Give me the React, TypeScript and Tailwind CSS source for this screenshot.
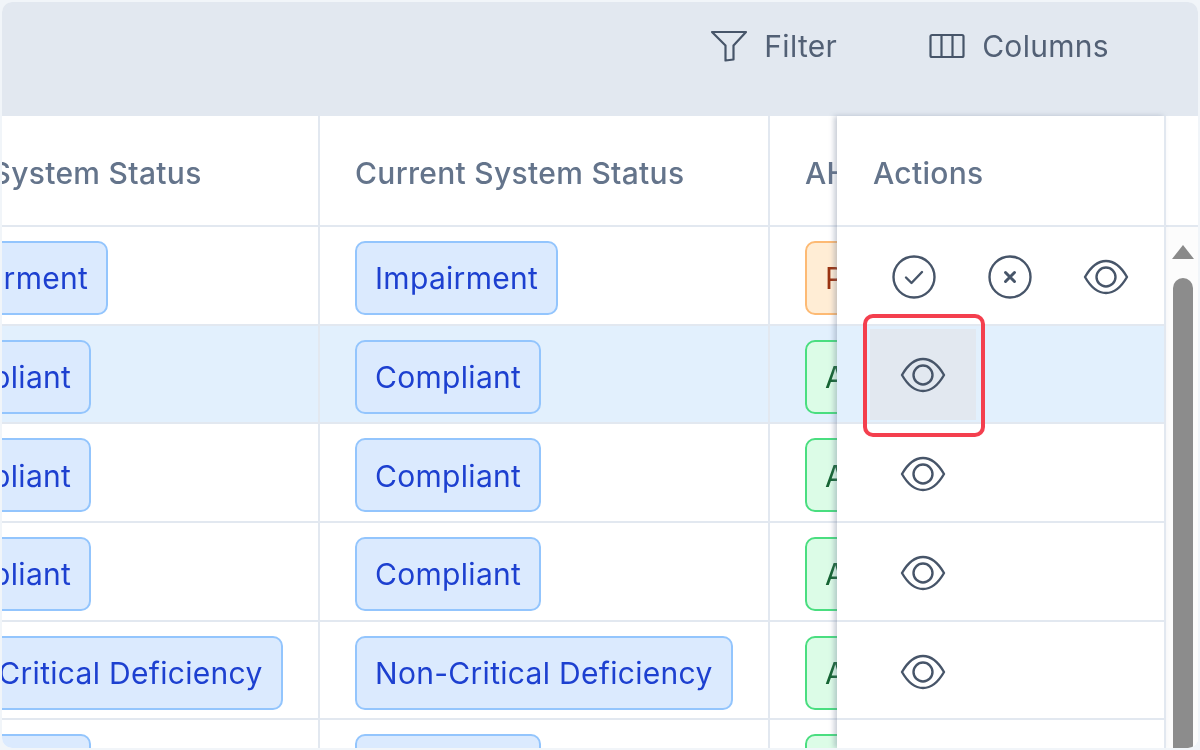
const rows = [
  { status: 'Impairment', ahj: 'Pending', tone: 'orange' },
  { status: 'Compliant', ahj: 'Approved', tone: 'green' },
  { status: 'Compliant', ahj: 'Approved', tone: 'green' },
  { status: 'Compliant', ahj: 'Approved', tone: 'green' },
  { status: 'Non-Critical Deficiency', ahj: 'Approved', tone: 'green' },
  { status: 'Compliant', ahj: 'Approved', tone: 'green' },
];

function EyeIcon() {
  return (
    <svg className="block" width="46" height="36" viewBox="0 0 46 36" fill="none" stroke="#475569" strokeWidth="2.4">
      <path d="M2 18C8 7.500 15 2 23 2C31 2 38 7.500 44 18C38 28.500 31 34 23 34C15 34 8 28.500 2 18Z" strokeLinejoin="round" />
      <circle cx="23" cy="18" r="9.500" />
    </svg>
  );
}

function CheckCircleIcon() {
  return (
    <svg className="block" width="44" height="44" viewBox="0 0 44 44" fill="none" stroke="#475569" strokeWidth="2.400" strokeLinecap="round" strokeLinejoin="round">
      <circle cx="22" cy="22" r="20.500" />
      <path d="M14 22.500L19.500 28L30 17" />
    </svg>
  );
}

function XCircleIcon() {
  return (
    <svg className="block" width="44" height="44" viewBox="0 0 44 44" fill="none" stroke="#475569" strokeWidth="2.400" strokeLinecap="round">
      <circle cx="22" cy="22" r="20.500" />
      <path d="M17.500 17.500L26.500 26.500M26.500 17.500L17.500 26.500" strokeWidth="3" />
    </svg>
  );
}

function FilterIcon() {
  return (
    <svg className="block" width="38" height="32" viewBox="0 0 38 32" fill="none" stroke="#475569" strokeWidth="2.200" strokeLinejoin="round">
      <path d="M2 2H36L23.500 15.500V29.500L15.500 30.500V15.500L2 2Z" />
    </svg>
  );
}

function ColumnsIcon() {
  return (
    <svg className="block" width="36" height="26" viewBox="0 0 36 26" fill="none" stroke="#475569" strokeWidth="2.200" strokeLinejoin="round">
      <rect x="1.500" y="2" width="33" height="22" rx="1.500" />
      <path d="M12.500 2V24M23.500 2V24" />
    </svg>
  );
}

function StatusBadge({ label }: { label: string }) {
  return (
    <span className="inline-flex h-[74px] shrink-0 items-center whitespace-nowrap rounded-[10px] border-2 border-[#93c5fd] bg-[#dbeafe] px-[18px] pt-[2px] text-[30px] tracking-[0.3px] text-[#1d40d0]">
      {label}
    </span>
  );
}

function AhjBadge({ label, tone }: { label: string; tone: string }) {
  const toneClass =
    tone === 'orange'
      ? 'border-[#fdba74] bg-[#ffedd5] text-[#9a3412]'
      : 'border-[#4ade80] bg-[#dcfce7] text-[#166534]';
  return (
    <span className={`inline-flex h-[74px] shrink-0 items-center whitespace-nowrap rounded-[10px] border-2 px-[18px] pt-[2px] text-[30px] tracking-[0.3px] ${toneClass}`}>
      {label}
    </span>
  );
}

function HeaderCell({ label }: { label: string }) {
  return (
    <div className="flex h-full w-[450px] shrink-0 items-center border-r-2 border-[#e2e8f0] pt-[6px] pl-[35px] text-[30px] font-medium tracking-[0.3px] whitespace-nowrap text-[#64748b]">
      {label}
    </div>
  );
}

function BodyCell({ children }: { children: React.ReactNode }) {
  return (
    <div className="flex h-full w-[450px] shrink-0 items-center border-r-2 border-[#e2e8f0] pt-[5px] pl-[35px]">
      {children}
    </div>
  );
}

export default function App() {
  return (
    <div className="h-[750px] w-[1200px] overflow-hidden bg-[#f1f5f9] p-[2px] font-['Inter',sans-serif] blur-[0.5px]">
      <div className="flex h-full flex-col overflow-hidden rounded-[10px] bg-white">
        <div className="flex h-[114px] shrink-0 items-center justify-end gap-[92px] bg-[#e2e8f0] pr-[89px] pb-[26px] text-[30px] tracking-[0.3px] text-[#526075]">
          <button type="button" className="flex items-center gap-[16px]">
            <FilterIcon />
            Filter
          </button>
          <button type="button" className="flex items-center gap-[17px]">
            <ColumnsIcon />
            Columns
          </button>
        </div>

        <div className="relative flex min-h-0 flex-1">
          <div className="min-w-0 flex-1 overflow-hidden">
            <div className="ml-[-132px] w-[1400px]">
              <div className="flex h-[111px] border-b-2 border-[#e2e8f0]">
                <HeaderCell label="Initial System Status" />
                <HeaderCell label="Current System Status" />
                <HeaderCell label="AHJ Status" />
              </div>
              {rows.map((row, i) => (
                <div
                  key={i}
                  className={`flex h-[98.7px] border-b-2 border-[#e2e8f0] ${i === 1 ? 'bg-[#e2f0fd]' : ''}`}
                >
                  <BodyCell><StatusBadge label={row.status} /></BodyCell>
                  <BodyCell><StatusBadge label={row.status} /></BodyCell>
                  <BodyCell><AhjBadge label={row.ahj} tone={row.tone} /></BodyCell>
                </div>
              ))}
            </div>
          </div>

          <div className="z-10 w-[329px] shrink-0 border-r-2 border-[#e2e8f0] bg-white shadow-[-3px_0_5px_rgba(100,116,139,0.35)]">
            <div className="flex h-[111px] items-center border-b-2 border-[#e2e8f0] pt-[6px] pl-[36px] text-[30px] font-medium tracking-[0.3px] text-[#64748b]">
              Actions
            </div>
            {rows.map((row, i) => (
              <div
                key={i}
                className={`flex h-[98.7px] items-center border-b-2 border-[#e2e8f0] pt-[3px] ${i === 1 ? 'bg-[#e2f0fd]' : ''}`}
              >
                {i === 0 ? (
                  <div className="flex items-center pl-[29px]">
                    <span className="flex w-[96px] justify-center"><CheckCircleIcon /></span>
                    <span className="flex w-[96px] justify-center"><XCircleIcon /></span>
                    <span className="flex w-[96px] justify-center"><EyeIcon /></span>
                  </div>
                ) : i < 5 ? (
                  <div className="ml-[33px] flex h-[91px] w-[106px] items-center justify-center">
                    <EyeIcon />
                  </div>
                ) : null}
              </div>
            ))}
          </div>

          <div className="flex w-[32px] shrink-0 flex-col bg-white">
            <div className="h-[111px] shrink-0 border-b-2 border-[#e2e8f0]" />
            <div className="flex min-h-0 flex-1 flex-col items-center bg-[#fcfcfc] pt-[18px] pl-[2px]">
              <div className="h-0 w-0 border-x-[11px] border-b-[14px] border-x-transparent border-b-[#8a8a8a]" />
              <div className="mt-[19px] w-[20px] flex-1 rounded-t-[10px] bg-[#8c8c8c]" />
            </div>
          </div>

          <div className="absolute top-[213px] left-[868px] z-20 flex h-[91px] w-[106px] items-center justify-center bg-[#e2e8f0] pt-[1px]">
            <EyeIcon />
          </div>
          <div className="absolute top-[198px] left-[861px] z-20 h-[123px] w-[122px] rounded-[10px] border-[4px] border-[#f43f4e]" />
        </div>
      </div>
    </div>
  );
}
